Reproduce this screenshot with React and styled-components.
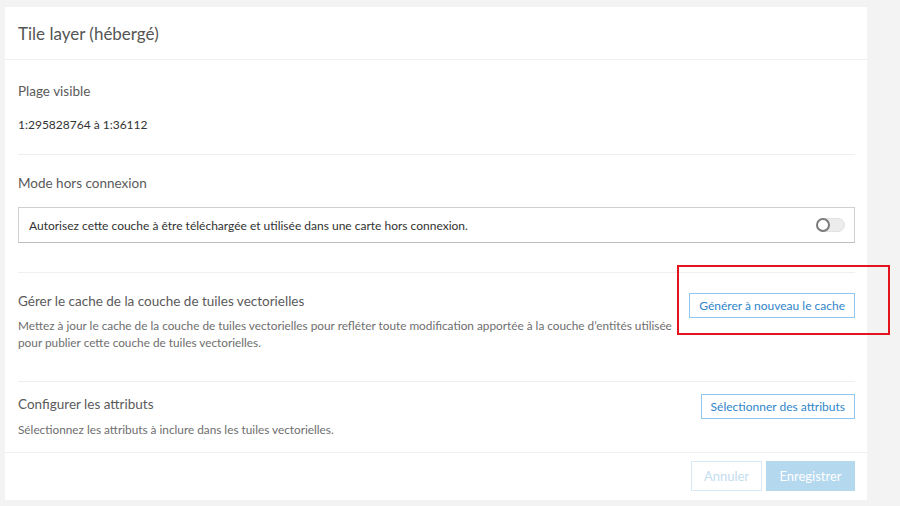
import React from "react";
import styled, { createGlobalStyle } from "styled-components";

const GlobalStyle = createGlobalStyle`
  html, body {
    margin: 0;
    padding: 0;
    background: #f3f3f3;
  }
  body {
    font-family: "Lato", "Open Sans", sans-serif;
    color: #4c4c4c;
  }
`;

const Page = styled.div`
  padding: 7px 33px 6px 5px;
  width: 862px;
`;

const Card = styled.div`
  background: #fff;
  display: flex;
  flex-direction: column;
`;

const Header = styled.h1`
  margin: 0;
  height: 52px;
  padding: 0 13px;
  display: flex;
  align-items: center;
  font-size: 17px;
  font-weight: 400;
  color: #555;
  border-bottom: 1px solid #efefef;
`;

const Body = styled.div`
  padding: 0 12px 0 13px;
`;

const Section = styled.section`
  padding: ${({ pad }) => pad};
  border-bottom: ${({ last }) => (last ? "none" : "1px solid #efefef")};
`;

const Row = styled.div`
  display: flex;
  align-items: flex-start;
  justify-content: space-between;
  gap: 8px;
`;

const TextColumn = styled.div`
  flex: 1;
  min-width: 0;
`;

const Title = styled.h2`
  margin: 0;
  font-size: 13.5px;
  line-height: 20px;
  font-weight: 400;
  color: #5a5a5a;
`;

const Value = styled.div`
  margin-top: 14px;
  font-size: 12px;
  line-height: 20px;
  color: #323232;
`;

const Description = styled.p`
  margin: ${({ top }) => top}px 0 0;
  font-size: 11.8px;
  line-height: 17px;
  color: #6e6e6e;
`;

const OptionBox = styled.div`
  margin-top: 14px;
  height: 34px;
  border: 1px solid #d0d0d0;
  border-bottom-color: #bdbdbd;
  padding: 0 9px 0 10px;
  display: flex;
  align-items: center;
  justify-content: space-between;
  font-size: 12px;
  color: #323232;
`;

const Toggle = styled.span`
  position: relative;
  width: 26px;
  height: 12px;
  border-radius: 7px;
  background: #ececec;
  border: 1px solid #e2e2e2;
  flex: none;
  margin-bottom: 1px;

  &::before {
    content: "";
    position: absolute;
    left: -2px;
    top: -1px;
    width: 10px;
    height: 10px;
    border-radius: 50%;
    background: #fff;
    border: 2px solid #7a7a7a;
  }
`;

const ButtonSlot = styled.div`
  position: relative;
  flex: none;
  margin-top: ${({ top }) => top || 0}px;
`;

const Highlight = styled.div`
  position: absolute;
  top: -28px;
  left: -12px;
  right: -35px;
  bottom: -17px;
  border: 2px solid #e4141f;
  pointer-events: none;
`;

const OutlineButton = styled.button`
  height: 25px;
  padding: 0 9px;
  background: #fff;
  border: 1px solid #92c6ec;
  color: #2f85c9;
  font-family: inherit;
  font-size: 12px;
  white-space: nowrap;
`;

const Footer = styled.div`
  border-top: 1px solid #efefef;
  padding: 8px 12px 9px 13px;
  display: flex;
  justify-content: flex-end;
  gap: 4px;
`;

const FooterButton = styled.button`
  width: ${({ primary }) => (primary ? 89 : 71)}px;
  height: 30px;
  padding: 0;
  font-family: inherit;
  font-size: 13px;
  border: 1px solid ${({ primary }) => (primary ? "#b4d8ee" : "#d6e9f6")};
  background: ${({ primary }) => (primary ? "#b4d8ee" : "#fff")};
  color: ${({ primary }) => (primary ? "#fff" : "#c3ddef")};
`;

export default function App() {
  return (
    <>
      <GlobalStyle />
      <Page>
        <Card>
          <Header>Tile layer (hébergé)</Header>
          <Body>
            <Section pad="21px 0 19px">
              <Title>Plage visible</Title>
              <Value>1:295828764 à 1:36112</Value>
            </Section>

            <Section pad="18px 0 29px">
              <Title>Mode hors connexion</Title>
              <OptionBox>
                Autorisez cette couche à être téléchargée et utilisée dans une carte hors connexion.
                <Toggle />
              </OptionBox>
            </Section>

            <Section pad="18px 0 30px">
              <Row>
                <TextColumn>
                  <Title>Gérer le cache de la couche de tuiles vectorielles</Title>
                  <Description top={6}>
                    Mettez à jour le cache de la couche de tuiles vectorielles pour refléter toute
                    modification apportée à la couche d’entités utilisée pour publier cette couche
                    de tuiles vectorielles.
                  </Description>
                </TextColumn>
                <ButtonSlot top={2}>
                  <OutlineButton>Générer à nouveau le cache</OutlineButton>
                  <Highlight />
                </ButtonSlot>
              </Row>
            </Section>

            <Section pad="12px 0 14px" last>
              <Row>
                <TextColumn>
                  <Title>Configurer les attributs</Title>
                  <Description top={7}>
                    Sélectionnez les attributs à inclure dans les tuiles vectorielles.
                  </Description>
                </TextColumn>
                <ButtonSlot>
                  <OutlineButton>Sélectionner des attributs</OutlineButton>
                </ButtonSlot>
              </Row>
            </Section>
          </Body>
          <Footer>
            <FooterButton>Annuler</FooterButton>
            <FooterButton primary>Enregistrer</FooterButton>
          </Footer>
        </Card>
      </Page>
    </>
  );
}
